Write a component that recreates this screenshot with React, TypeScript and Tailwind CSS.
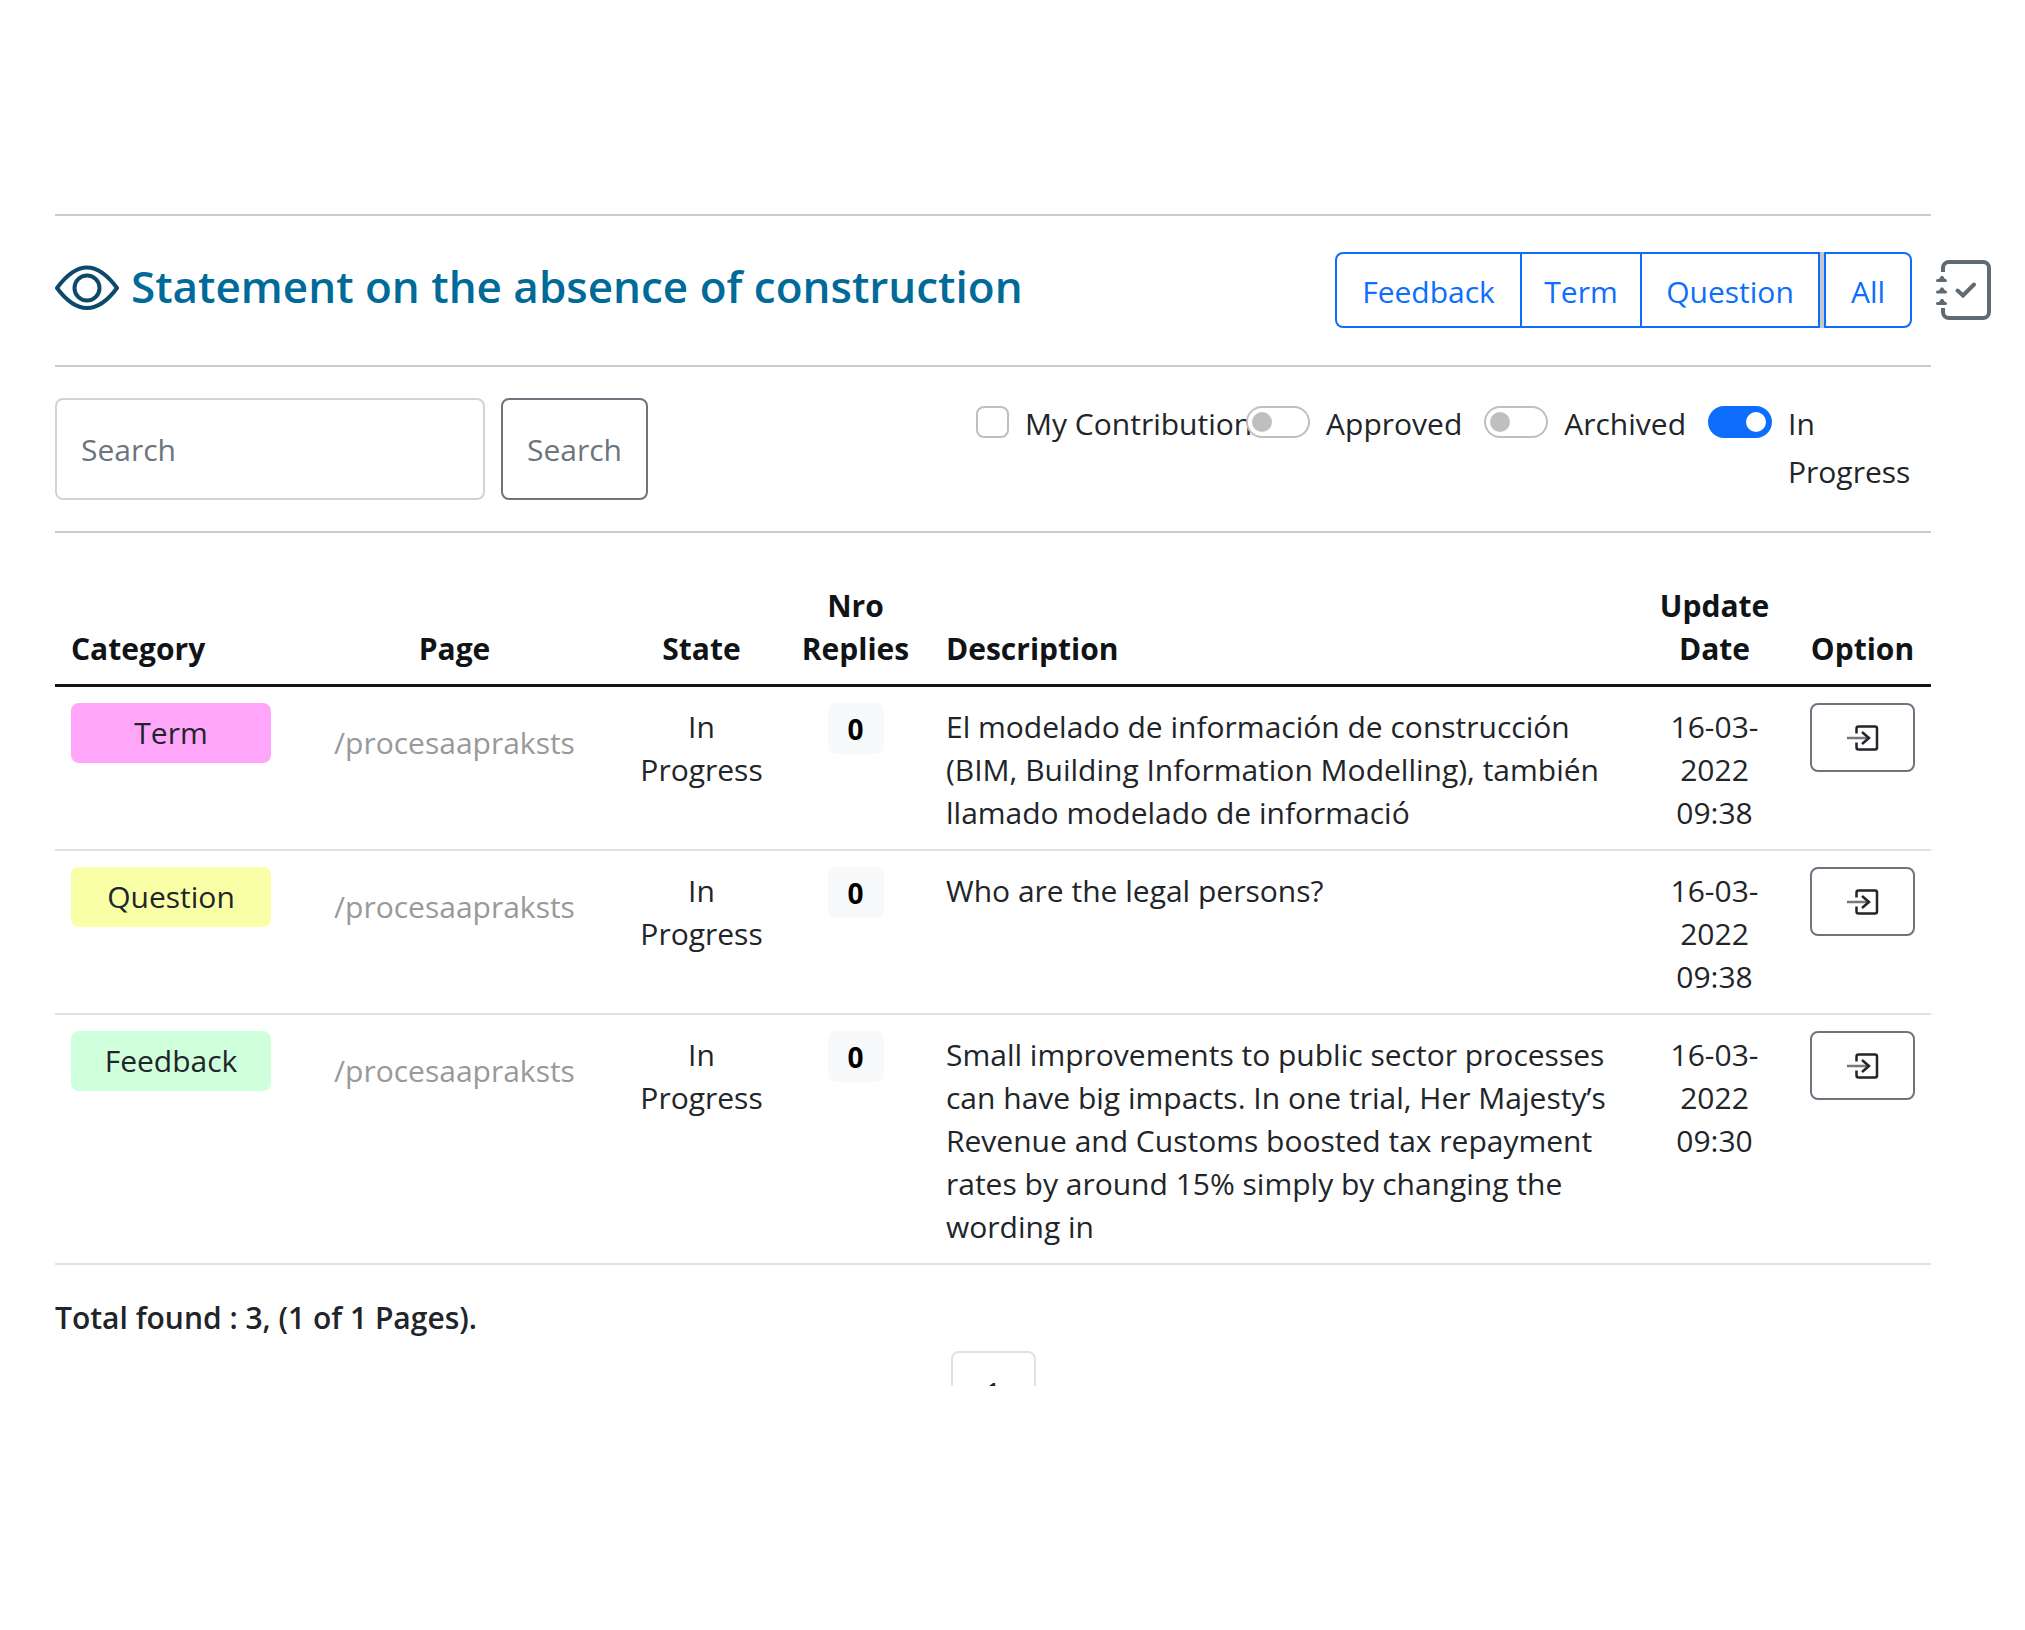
import React from "react";

const rows = [
  {
    category: "Term",
    color: "bg-[#ffa6fb]",
    text: "El modelado de información de construcción (BIM, Building Information Modelling), también llamado modelado de informació",
    time: "09:38",
  },
  { category: "Question", color: "bg-[#f8ffa6]", text: "Who are the legal persons?", time: "09:38" },
  {
    category: "Feedback",
    color: "bg-[#d0ffdb]",
    text: "Small improvements to public sector processes can have big impacts. In one trial, Her Majesty’s Revenue and Customs boosted tax repayment rates by around 15% simply by changing the wording in",
    time: "09:30",
  },
];

function EyeIcon() {
  return (
    <svg viewBox="0 0 64 48" className="h-12 w-16 shrink-0" fill="none" stroke="#0b4a6b" strokeWidth="4" aria-hidden="true">
      <path d="M2 26C9 16.500 19 5.500 32 5.500S55 16.500 62 26C55 35.500 45 46 32 46S9 35.500 2 26Z" strokeLinejoin="round" />
      <circle cx="32" cy="26" r="12.500" />
    </svg>
  );
}

function NotebookIcon() {
  return (
    <svg viewBox="0 0 56 60" className="h-[60px] w-14" fill="none" stroke="#5f6a73" strokeWidth="4" aria-hidden="true">
      <path d="M7 12V8a6 6 0 0 1 6-6H47a6 6 0 0 1 6 6V52a6 6 0 0 1-6 6H13a6 6 0 0 1-6-6V48" />
      <path d="M21.500 30.500L27 35.500L38 24.500" strokeLinecap="round" />
      <path d="M1.500 20.500H9.500M1.500 32H9.500M1.500 43.500H9.500" strokeWidth="3" strokeLinecap="round" />
      <path d="M2 20.500L5 16H7L10 20.500ZM2 32L5 27.500H7L10 32ZM2 43.500L5 39H7L10 43.500Z" fill="#5f6a73" stroke="none" />
    </svg>
  );
}

function EnterIcon() {
  return (
    <svg viewBox="0 0 32 26" className="h-[26px] w-8" fill="none" stroke="#212529" strokeWidth="2.500" aria-hidden="true">
      <path d="M9.500 8.500V3.500a2 2 0 0 1 2-2H28a2 2 0 0 1 2 2V22.500a2 2 0 0 1-2 2H11.500a2 2 0 0 1-2-2V17.500" />
      <path d="M0 13H21" stroke="#777777" />
      <path d="M15 7L22 13L15 19" />
    </svg>
  );
}

function Switch({ id, label, on = false }: { id: string; label: string; on?: boolean }) {
  return (
    <div className="relative flex items-start gap-4">
      <input
        id={id}
        type="checkbox"
        role="switch"
        defaultChecked={on}
        className="mt-2 h-8 w-16 shrink-0 appearance-none rounded-full border-2 border-[#bfbfbf] bg-white before:m-1 before:block before:size-5 before:rounded-full before:bg-[#bfbfbf] checked:border-[#0d6efd] checked:bg-[#0d6efd] checked:before:ml-9 checked:before:bg-white"
      />
      <label htmlFor={id} className="pt-0.5">{label}</label>
    </div>
  );
}

export default function App() {
  return (
    <main className="min-h-screen bg-white pt-[214px] pr-[94px] pl-[55px] font-['Open_Sans','Segoe_UI',sans-serif] text-[30px] leading-[48px] text-[#212529]">
      <div className="h-[1172px] overflow-y-clip">
        <header className="flex items-start justify-between border-y-2 border-[#cccccc] pt-9 pb-[37px]">
          <h1 className="flex items-center gap-3 pt-1 text-[44px] leading-[60px] font-semibold text-[#006a99]">
            <EyeIcon />
            Statement on the absence of construction
          </h1>
          <div className="-mr-[61px] flex items-center gap-6">
            <div className="flex text-[#0d6efd]">
              <button className="h-19 w-[185px] rounded-l-lg border-2 border-r-0 border-[#0d6efd] pt-1">Feedback</button>
              <button className="h-19 w-[120px] border-2 border-r-0 border-[#0d6efd] pt-1">Term</button>
              <button className="h-19 w-[180px] border-2 border-[#0d6efd] pt-1">Question</button>
              <span className="w-1 bg-[#c8c8c8]" />
              <button className="h-19 w-[88px] rounded-r-lg border-2 border-[#0d6efd] pt-1">All</button>
            </div>
            <button aria-label="Notebook">
              <NotebookIcon />
            </button>
          </div>
        </header>

        <section className="flex items-start justify-between border-b-2 border-[#cccccc] pt-[31px] pb-[31px]">
          <form className="flex gap-4">
            <input
              type="search"
              aria-label="Search"
              placeholder="Search"
              className="h-[102px] w-[430px] rounded-lg border-2 border-[#ced4da] px-6 placeholder:text-[#6c757d]"
            />
            <button type="button" className="h-[102px] w-[147px] rounded-lg border-2 border-[#6c757d] pt-0.5 text-[#6c757d]">
              Search
            </button>
          </form>
          <div className="mr-[18px] flex items-start gap-[22px]">
            <div className="flex w-[248px] items-start gap-4">
              <input
                id="mine"
                type="checkbox"
                className="mt-2 h-8 w-[33px] shrink-0 appearance-none rounded-lg border-2 border-[#bfbfbf] bg-white checked:bg-[#0d6efd]"
              />
              <label htmlFor="mine" className="pt-0.5 whitespace-nowrap">My Contribution</label>
            </div>
            <Switch id="approved" label="Approved" />
            <Switch id="archived" label="Archived" />
            <div className="w-[205px]">
              <Switch id="progress" label="In Progress" on />
            </div>
          </div>
        </section>

        <table className="mt-8 w-full table-fixed border-collapse text-center leading-[43px]">
          <colgroup>
            <col className="w-[232px]" />
            <col className="w-[335px]" />
            <col className="w-[159px]" />
            <col className="w-[149px]" />
            <col />
            <col className="w-[159px]" />
            <col className="w-[137px]" />
          </colgroup>
          <thead>
            <tr className="border-b-3 border-[#111417] align-bottom font-bold text-[#111417]">
              <th className="px-4 pt-[19px] pb-3.5 text-left">Category</th>
              <th className="px-4 pt-[19px] pb-3.5">Page</th>
              <th className="px-4 pt-[19px] pb-3.5">State</th>
              <th className="pt-[19px] pb-3.5">Nro Replies</th>
              <th className="px-4 pt-[19px] pb-3.5 text-left">Description</th>
              <th className="px-4 pt-[19px] pb-3.5">Update Date</th>
              <th className="pt-[19px] pb-3.5">Option</th>
            </tr>
          </thead>
          <tbody>
            {rows.map((r) => (
              <tr key={r.category} className="border-b-2 border-[#dee2e6] align-top">
                <td className="p-4">
                  <div className={`h-15 rounded-lg leading-[60px] ${r.color}`}>{r.category}</div>
                </td>
                <td className="px-4 pt-[34px]">
                  <a href="#page" className="block text-[#999999]">/procesaapraksts</a>
                </td>
                <td className="pt-[18px] pb-[15px]">
                  In
                  <br />
                  Progress
                </td>
                <td className="px-4 pt-4">
                  <span className="mx-auto block h-[51px] w-14 rounded-lg bg-[#f8f9fa] text-[28px] leading-[53px] font-bold text-black">0</span>
                </td>
                <td className="px-4 pt-[18px] pb-[15px] text-left">{r.text}</td>
                <td className="px-4 pt-[18px] pb-[15px]">16-03-2022 {r.time}</td>
                <td className="p-4">
                  <button aria-label="Open" className="flex h-[69px] w-full items-center justify-center rounded-lg border-2 border-[#6c757d]">
                    <EnterIcon />
                  </button>
                </td>
              </tr>
            ))}
          </tbody>
        </table>

        <p className="mt-[29px] font-semibold">Total found : 3, (1 of 1 Pages).</p>
        <nav className="mt-[9px] flex justify-center">
          <a href="#1" className="h-21 w-[85px] rounded-lg border-2 border-[#dee2e6] text-center leading-[80px]">1</a>
        </nav>
      </div>
    </main>
  );
}
